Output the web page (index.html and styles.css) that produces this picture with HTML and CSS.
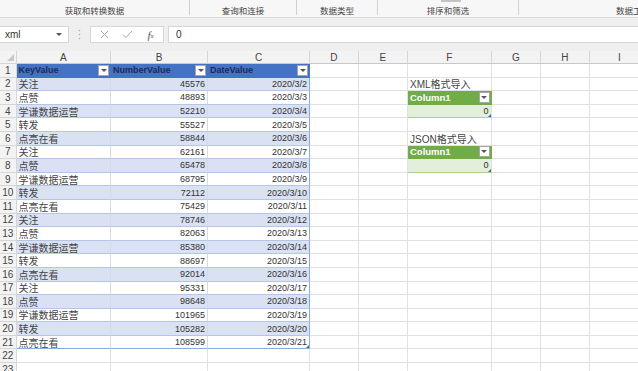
FILE: index.html
```html
<!DOCTYPE html>
<html lang="zh-CN">
<head>
    <meta charset="UTF-8">
    <meta name="viewport" content="width=device-width, initial-scale=1.0">
    <title>数据导入</title>
    <link rel="stylesheet" href="styles.css">
</head>
<body>
    <div class="ribbon">
        <div class="group g1"><span>获取和转换数据</span></div>
        <div class="group g2"><span>查询和连接</span></div>
        <div class="group g3"><span>数据类型</span></div>
        <div class="group g4"><i class="thumb"></i><span>排序和筛选</span></div>
        <div class="group g5"><span>数据工具</span></div>
    </div>

    <div class="fbar">
        <div class="namebox">xml<span class="caret"></span></div>
        <div class="dots">
            <svg width="3" height="11" viewBox="0 0 3 11"><circle cx="1.5" cy="1.5" r="0.8"/><circle cx="1.5" cy="5.5" r="0.8"/><circle cx="1.5" cy="9.5" r="0.8"/></svg>
        </div>
        <div class="tools">
            <span class="tool">
                <svg width="9" height="9" viewBox="0 0 9 9"><path d="M1 1L8 8M8 1L1 8"/></svg>
            </span>
            <span class="tool">
                <svg width="11" height="9" viewBox="0 0 11 9"><path d="M1 4.5L4 7.5L10 1"/></svg>
            </span>
            <span class="tool fx">f<small>x</small></span>
        </div>
        <div class="input">0</div>
    </div>

    <div class="sheet" id="sheet"></div>

    <script>
        const sheet = document.getElementById('sheet');
        const cols = ['A', 'B', 'C', 'D', 'E', 'F', 'G', 'H', 'I'];
        const keys = ['关注', '点赞', '学谦数据运营', '转发', '点亮在看'];
        const labels = { 2: 'XML格式导入', 6: 'JSON格式导入' };

        function cell(cls, text) {
            const d = document.createElement('div');
            d.className = 'cell ' + cls;
            if (text !== undefined) d.textContent = text;
            sheet.appendChild(d);
            return d;
        }

        function filter(d) {
            const f = document.createElement('span');
            f.className = 'filter';
            d.appendChild(f);
        }

        // column letters
        cell('corner');
        cols.forEach(c => cell('colhead', c));

        for (let r = 1; r <= 23; r++) {
            cell('rowhead', r);
            const i = r - 2;
            const band = i % 2 === 0 ? ' band' : '';
            const bottom = r === 21 ? ' bottom' : '';

            cols.forEach(c => {
                if (r === 1 && c === 'A') filter(cell('th', 'KeyValue'));
                else if (r === 1 && c === 'B') filter(cell('th', 'NumberValue'));
                else if (r === 1 && c === 'C') filter(cell('th', 'DateValue'));
                else if (r <= 21 && c === 'A') cell('td cjk' + band + bottom, keys[i % 5]);
                else if (r <= 21 && c === 'B') cell('td num' + band + bottom, 45576 + 3317 * i);
                else if (r <= 21 && c === 'C') cell('td num last' + band + bottom + (r === 21 ? ' mark' : ''), '2020/3/' + (i + 2));
                else if (c === 'F' && labels[r]) cell('cjk label', labels[r]);
                else if (c === 'F' && (r === 3 || r === 7)) filter(cell('gth', 'Column1'));
                else if (c === 'F' && (r === 4 || r === 8)) cell('gtd num mark', 0);
                else cell('');
            });
        }
    </script>
</body>
</html>
```

FILE: styles.css
```css
body {
    margin: 0;
    width: 638px;
    height: 371px;
    overflow: hidden;
    background-color: #efefef;
    font-family: "Liberation Sans", "Noto Sans CJK SC", sans-serif;
    color: #333;
}

/* ribbon group labels */
.ribbon {
    display: flex;
    height: 17px;
    background-color: #f7f7f7;
    border-bottom: 1px solid #d8d8d8;
    overflow: hidden;
}
.group {
    flex-shrink: 0;
    box-sizing: border-box;
    height: 15px;
    border-right: 1px solid #d0d0d0;
    display: flex;
    flex-direction: column;
    justify-content: flex-end;
    align-items: center;
    font-family: "Noto Sans CJK SC", sans-serif;
    font-size: 8.5px;
    line-height: 10px;
    color: #444;
}
.g1 { width: 190px; }
.g2 { width: 107px; }
.g3 { width: 81px; }
.g4 { width: 141px; }
.g5 { width: 228px; border-right: none; }
.thumb {
    width: 20px;
    height: 2px;
    margin: 0 0 auto 5px;
    background-color: #c4c4c4;
}

/* formula bar */
.fbar {
    display: flex;
    height: 17px;
    margin: 8px 0;
}
.namebox {
    width: 69px;
    box-sizing: border-box;
    display: flex;
    align-items: center;
    padding: 0 5px;
    background-color: #fff;
    border: 1px solid #d6d6d6;
    border-left: none;
    font-size: 10px;
    color: #333;
}
.caret {
    margin-left: auto;
    margin-right: 1px;
    border-left: 3px solid transparent;
    border-right: 3px solid transparent;
    border-top: 3px solid #555;
}
.dots {
    width: 21px;
    display: flex;
    align-items: center;
    justify-content: center;
    fill: #b0b0b0;
}
.tools {
    width: 74px;
    box-sizing: border-box;
    display: flex;
    align-items: center;
    padding-left: 2px;
    background-color: #fff;
    border: 1px solid #d6d6d6;
}
.tool {
    width: 23px;
    display: flex;
    justify-content: center;
    align-items: center;
    stroke: #a8a8a8;
    stroke-width: 1;
    fill: none;
}
.fx {
    font-family: "Liberation Serif", serif;
    font-style: italic;
    font-size: 11px;
    color: #555;
}
.fx small {
    font-size: 7px;
    margin-top: 3px;
}
.input {
    flex: 1;
    margin-left: 4px;
    padding-left: 7px;
    display: flex;
    align-items: center;
    background-color: #fff;
    border: 1px solid #d6d6d6;
    border-right: none;
    font-size: 10px;
}

/* worksheet grid */
.sheet {
    display: grid;
    grid-template-columns: 16.5px 94.5px 97px 102px 48.5px 49.5px 83.5px 49.7px 48.6px 60px;
    grid-template-rows: 13px;
    grid-auto-rows: 13.6px;
    background-color: #fff;
    height: 320px;
    overflow: hidden;
}
.cell {
    box-sizing: border-box;
    display: flex;
    align-items: center;
    padding: 0 2px;
    border-right: 1px solid #e1e1e1;
    border-bottom: 1px solid #e1e1e1;
    white-space: nowrap;
    overflow: hidden;
    font-size: 9px;
    color: #333;
}
.corner,
.colhead,
.rowhead {
    background-color: #f3f3f3;
    border-color: #d6d6d6;
    justify-content: center;
    font-size: 10px;
    color: #444;
    padding: 0;
}
.corner {
    position: relative;
}
.corner::after {
    content: "";
    position: absolute;
    right: 2px;
    bottom: 2px;
    border-left: 7px solid transparent;
    border-bottom: 7px solid #c8c8c8;
}
.colhead {
    border-bottom-color: #c8c8c8;
}
.cjk {
    font-size: 10px;
    color: #444;
}
.num {
    justify-content: flex-end;
}

/* blue table */
.th {
    justify-content: space-between;
    padding-right: 1px;
    background-color: #4472c4;
    border-color: #4472c4;
    font-weight: bold;
    color: #1c2a5a;
}
.td {
    border-bottom-color: #b4c6e7;
    border-right-color: #d3dae8;
}
.band {
    background-color: #d9e1f2;
}
.last {
    border-right-color: #8eaadb;
}
.bottom {
    border-bottom-color: #8eaadb;
}
.filter {
    flex-shrink: 0;
    width: 11px;
    height: 11px;
    box-sizing: border-box;
    display: flex;
    align-items: center;
    justify-content: center;
    background-color: #fff;
    border: 1px solid #a6a6a6;
}
.filter::after {
    content: "";
    border-left: 3px solid transparent;
    border-right: 3px solid transparent;
    border-top: 3px solid #555;
}

/* green tables */
.gth {
    justify-content: space-between;
    padding-right: 1px;
    background-color: #70ad47;
    border-color: #70ad47;
    font-size: 9.5px;
    font-weight: bold;
    color: #fff;
}
.gtd {
    background-color: #e2efda;
    border-bottom-color: #a9d08e;
}
.mark {
    position: relative;
}
.mark::after {
    content: "";
    position: absolute;
    right: 0;
    bottom: 0;
    border-left: 3px solid transparent;
    border-bottom: 3px solid #2f62c0;
}
```
